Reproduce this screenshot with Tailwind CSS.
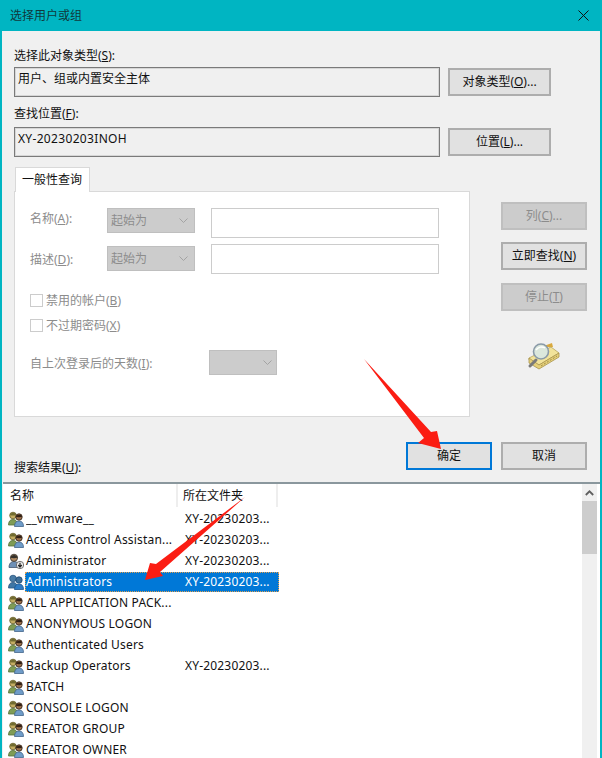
<!DOCTYPE html>
<html lang="zh-CN">
<head>
<meta charset="utf-8">
<title>选择用户或组</title>
<script src="https://cdn.jsdelivr.net/npm/@tailwindcss/browser@4"></script>
</head>
<body class="m-0">
<svg width="0" height="0" class="absolute">
  <defs>
    <g id="users">
      <path d="M0.5 14c0-3.500 1.500-5.500 4.500-5.500S9.500 10.500 9.500 14z" fill="#7f9c55" stroke="#55703a" stroke-width=".8"/>
      <circle cx="5" cy="4.500" r="3.300" fill="#c4ad62" stroke="#5f5a2a" stroke-width=".8"/>
      <path d="M1.800 4.200c.5-3 5.500-3.500 6.400 0-2 .4-4.400.4-6.400 0z" fill="#6f6a30"/>
      <path d="M6.500 15.500c0-3.500 1.500-5.500 4.500-5.500s4.500 2 4.500 5.500z" fill="#6f9cc8" stroke="#43658a" stroke-width=".8"/>
      <circle cx="11" cy="6" r="3.200" fill="#9a6f4a" stroke="#2f2015" stroke-width=".8"/>
      <path d="M7.800 5.800c.5-2.500 5.800-3 6.400 0-2 .5-4.400.5-6.400 0z" fill="#2f2015"/>
    </g>
    <g id="user">
      <path d="M1 14.500c0-4 2-6 5-6s5 2 5 6z" fill="#6f90b5" stroke="#42566c" stroke-width=".8"/>
      <circle cx="6" cy="4.800" r="3.600" fill="#b08a62" stroke="#33302a" stroke-width=".8"/>
      <path d="M2.400 4.800c.5-3.500 6.500-4 7.200 0-2 .5-5.200.5-7.200 0z" fill="#33302a"/>
      <circle cx="12" cy="12" r="3.700" fill="#ececec" stroke="#555" stroke-width=".8"/>
      <path d="M12 9.800v3.500M10.200 12l1.800 2 1.800-2" fill="none" stroke="#222" stroke-width="1.200"/>
    </g>
    <g id="usersel">
      <path d="M0.500 14c0-3.500 1.500-5.500 4.500-5.500S9.500 10.500 9.500 14z" fill="#3f76a5" stroke="#2a5580" stroke-width=".8"/>
      <circle cx="5" cy="4.500" r="3.300" fill="#4a7ca5" stroke="#2a5580" stroke-width=".8"/>
      <path d="M6.500 15.500c0-3.500 1.500-5.500 4.500-5.500s4.500 2 4.500 5.500z" fill="#2f7cc4" stroke="#1a5590" stroke-width=".8"/>
      <circle cx="11" cy="6" r="3.200" fill="#3f6f98" stroke="#1a4670" stroke-width=".8"/>
    </g>
  </defs>
</svg>

<div class="relative w-[602px] h-[758px] overflow-hidden bg-[#f0f0f0] border-x-2 border-[#00b5c2] text-[12px] leading-[16px] text-[#111] font-['Noto_Sans','Noto_Sans_CJK_SC',sans-serif]">

  <!-- title bar -->
  <div class="h-[31px] -mx-[2px] bg-[#00b5c2] flex items-center justify-between pl-[10px] pr-[13px] text-[#10393c]">
    <span>选择用户或组</span>
    <svg width="11" height="11" viewBox="0 0 11 11"><path d="M.5.500l10 10M10.500.500l-10 10" stroke="#111" fill="none"/></svg>
  </div>

  <!-- object type / location -->
  <div class="pl-[12px] pt-[17px]">
    <div class="h-[16px] mb-[3px]">选择此对象类型(<u>S</u>):</div>
    <div class="flex items-center h-[30px]">
      <div class="w-[426px] h-[30px] border border-[#7a7a7a] ring-1 ring-inset ring-[#9a9a9a]/30 pl-[3px] pt-[3px]">用户、组或内置安全主体</div>
      <div class="ml-[8px] w-[103px] h-[28px] border-2 border-[#adadad] bg-[#e1e1e1] flex items-center justify-center">对象类型(<u>O</u>)...</div>
    </div>
    <div class="h-[16px] mt-[9px] mb-[5px]">查找位置(<u>F</u>):</div>
    <div class="flex items-center h-[30px]">
      <div class="w-[426px] h-[30px] border border-[#7a7a7a] ring-1 ring-inset ring-[#9a9a9a]/30 pl-[3px] pt-[3px] tracking-[0.33px]">XY-20230203INOH</div>
      <div class="ml-[8px] w-[103px] h-[28px] border-2 border-[#adadad] bg-[#e1e1e1] flex items-center justify-center">位置(<u>L</u>)...</div>
    </div>
  </div>

  <!-- tab + side buttons -->
  <div class="flex pl-[12px] mt-[10px]">
    <div class="w-[456px]">
      <div class="relative z-10 ml-px w-[75px] h-[25px] -mb-px bg-white border border-b-0 border-[#d9d9d9] flex items-center pl-[6px]">一般性查询</div>
      <div class="w-[456px] h-[226px] bg-white border border-[#d9d9d9] pl-[15px] pt-[16px] text-[#8c8c8c]">
        <div class="flex items-start h-[36px]">
          <span class="w-[77px] pt-[3px]">名称(<u>A</u>):</span>
          <div class="w-[88px] h-[25px] mr-[16px] bg-[#cccccc] border border-[#bfbfbf] flex items-center justify-between pl-[3px] pr-[6px]">起始为<svg width="9" height="5" viewBox="0 0 9 5"><path d="M.5.500l4 4 4-4" fill="none" stroke="#a3a3a3"/></svg></div>
          <div class="w-[228px] h-[30px] border border-[#cccccc]"></div>
        </div>
        <div class="flex items-start h-[44px]">
          <span class="w-[77px] pt-[8px]">描述(<u>D</u>):</span>
          <div class="w-[88px] h-[25px] mt-[2px] mr-[16px] bg-[#cccccc] border border-[#bfbfbf] flex items-center justify-between pl-[3px] pr-[6px]">起始为<svg width="9" height="5" viewBox="0 0 9 5"><path d="M.5.500l4 4 4-4" fill="none" stroke="#a3a3a3"/></svg></div>
          <div class="w-[228px] h-[30px] border border-[#cccccc]"></div>
        </div>
        <div class="flex items-center h-[25px]"><span class="w-[13px] h-[13px] border border-[#cccccc] mr-[3px]"></span>禁用的帐户(<u>B</u>)</div>
        <div class="flex items-center h-[25px]"><span class="w-[13px] h-[13px] border border-[#cccccc] mr-[3px]"></span>不过期密码(<u>X</u>)</div>
        <div class="flex items-center h-[25px] mt-[12px]">
          <span class="w-[179px] pt-[3px]">自上次登录后的天数(<u>I</u>):</span>
          <div class="w-[68px] h-[25px] bg-[#cccccc] border border-[#bfbfbf] flex items-center justify-end pr-[4px]"><svg width="9" height="5" viewBox="0 0 9 5"><path d="M.5.500l4 4 4-4" fill="none" stroke="#a3a3a3"/></svg></div>
        </div>
      </div>
    </div>
    <div class="ml-[31px] w-[86px] pt-[35px] flex flex-col">
      <div class="h-[28px] border-2 border-[#bfbfbf] bg-[#cccccc] text-[#8c8c8c] flex items-center justify-center">列(<u>C</u>)...</div>
      <div class="h-[28px] mt-[12px] border-2 border-[#adadad] bg-[#e1e1e1] flex items-center justify-center">立即查找(<u>N</u>)</div>
      <div class="h-[28px] mt-[13px] border-2 border-[#bfbfbf] bg-[#cccccc] text-[#8c8c8c] flex items-center justify-center">停止(<u>T</u>)</div>
      <svg class="ml-[26px] mt-[32px]" width="33" height="27" viewBox="0 0 33 27">
        <path d="M2 15L24 4l8 6-20 12-10-5z" fill="#f2e39a" stroke="#b9a45a" stroke-width=".8"/>
        <path d="M2 15v5l10 6 20-12v-4L12 22z" fill="#e5d07a" stroke="#a8934c" stroke-width=".8"/>
        <path d="M14 23l16-10" stroke="#a08c45" stroke-dasharray="2 1.500"/>
        <path d="M14 4l11-4 1 4z" fill="#d9a93f"/>
        <path d="M9 17l-6 6" stroke="#7a7a7a" stroke-width="3" stroke-linecap="round"/>
        <circle cx="14" cy="8.500" r="7.500" fill="#dbe7dc" stroke="#8a9aa8" stroke-width="1.600"/>
        <path d="M9 7c2-3 6-4 9-2" stroke="#fff" fill="none" stroke-width="1.500"/>
      </svg>
    </div>
  </div>

  <!-- OK / cancel -->
  <div class="flex pl-[404px] mt-[25px]">
    <div class="w-[86px] h-[28px] border-2 border-[#0078d7] bg-[#e1e1e1] flex items-center justify-center">确定</div>
    <div class="ml-[9px] w-[86px] h-[28px] border-2 border-[#adadad] bg-[#e1e1e1] flex items-center justify-center">取消</div>
  </div>

  <div class="pl-[12px] h-[12px] leading-[12px] -mt-[8px]">搜索结果(<u>U</u>):</div>

  <!-- results list -->
  <div class="relative mt-[8px] ml-px h-[276px] bg-white border-t-2 border-[#8a979d] overflow-hidden">
    <div class="flex h-[23px] items-center">
      <div class="w-[175px] h-full border-r-2 border-[#eeeeee] pl-[7px] flex items-center">名称</div>
      <div class="w-[100px] h-full border-r-2 border-[#eeeeee] pl-[5px] flex items-center">所在文件夹</div>
    </div>
    <div class="w-[276px] mt-px tracking-[0.18px]">
      <div class="flex items-center h-[21px]"><svg class="ml-[5px] mr-[2px] shrink-0" width="16" height="16" viewBox="0 0 16 16"><use href="#users"/></svg><span class="w-[157px] truncate">__vmware__</span><span class="ml-[2px]">XY-20230203...</span></div>
      <div class="flex items-center h-[21px]"><svg class="ml-[5px] mr-[2px] shrink-0" width="16" height="16" viewBox="0 0 16 16"><use href="#users"/></svg><span class="w-[157px]">Access Control Assistan...</span><span class="ml-[2px]">XY-20230203...</span></div>
      <div class="flex items-center h-[21px]"><svg class="ml-[5px] mr-[2px] shrink-0" width="16" height="16" viewBox="0 0 16 16"><use href="#user"/></svg><span class="w-[157px]">Administrator</span><span class="ml-[2px]">XY-20230203...</span></div>
      <div class="flex items-center h-[21px]"><svg class="ml-[5px] mr-[1px] shrink-0" width="16" height="16" viewBox="0 0 16 16"><use href="#usersel"/></svg><div class="flex-1 h-[20px] flex items-center bg-[#0078d7] text-white outline-1 outline-dotted outline-[#e0a050] -outline-offset-1 pl-px"><span class="w-[157px]">Administrators</span><span class="ml-[2px]">XY-20230203...</span></div></div>
      <div class="flex items-center h-[21px]"><svg class="ml-[5px] mr-[2px] shrink-0" width="16" height="16" viewBox="0 0 16 16"><use href="#users"/></svg><span>ALL APPLICATION PACK...</span></div>
      <div class="flex items-center h-[21px]"><svg class="ml-[5px] mr-[2px] shrink-0" width="16" height="16" viewBox="0 0 16 16"><use href="#users"/></svg><span>ANONYMOUS LOGON</span></div>
      <div class="flex items-center h-[21px]"><svg class="ml-[5px] mr-[2px] shrink-0" width="16" height="16" viewBox="0 0 16 16"><use href="#users"/></svg><span>Authenticated Users</span></div>
      <div class="flex items-center h-[21px]"><svg class="ml-[5px] mr-[2px] shrink-0" width="16" height="16" viewBox="0 0 16 16"><use href="#users"/></svg><span class="w-[157px]">Backup Operators</span><span class="ml-[2px]">XY-20230203...</span></div>
      <div class="flex items-center h-[21px]"><svg class="ml-[5px] mr-[2px] shrink-0" width="16" height="16" viewBox="0 0 16 16"><use href="#users"/></svg><span>BATCH</span></div>
      <div class="flex items-center h-[21px]"><svg class="ml-[5px] mr-[2px] shrink-0" width="16" height="16" viewBox="0 0 16 16"><use href="#users"/></svg><span>CONSOLE LOGON</span></div>
      <div class="flex items-center h-[21px]"><svg class="ml-[5px] mr-[2px] shrink-0" width="16" height="16" viewBox="0 0 16 16"><use href="#users"/></svg><span>CREATOR GROUP</span></div>
      <div class="flex items-center h-[21px]"><svg class="ml-[5px] mr-[2px] shrink-0" width="16" height="16" viewBox="0 0 16 16"><use href="#users"/></svg><span>CREATOR OWNER</span></div>
    </div>
    <!-- scrollbar -->
    <div class="absolute top-0 right-[3px] bottom-0 w-[15px] bg-[#f0f0f0] flex flex-col">
      <div class="h-[17px] flex items-center justify-center"><svg width="9" height="6" viewBox="0 0 9 6"><path d="M.8 5L4.500 1.300 8.200 5" fill="none" stroke="#606060" stroke-width="1.800"/></svg></div>
      <div class="h-[53px] bg-[#cdcdcd]"></div>
    </div>
  </div>

  <!-- red annotation arrows -->
  <svg class="absolute left-[-2px] top-0 pointer-events-none" width="602" height="758" viewBox="0 0 602 758">
    <polygon points="364,359 431,432 437,431 441,449 418,443 424,438" fill="#fb1d13"/>
    <polygon points="245,497 156,564 150,563 145,580 163,576 160,572" fill="#fb1d13"/>
  </svg>
</div>
</body>
</html>
